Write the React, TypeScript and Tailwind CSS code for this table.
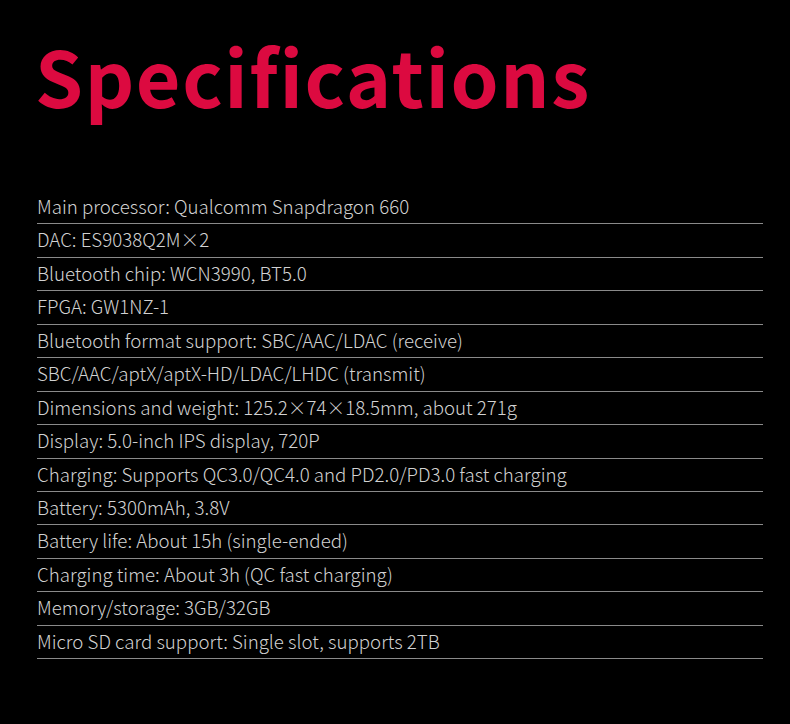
import React from "react";

const rows = [
  "Main processor: Qualcomm Snapdragon 660",
  "DAC: ES9038Q2M\u00d72",
  "Bluetooth chip: WCN3990, BT5.0",
  "FPGA: GW1NZ-1",
  "Bluetooth format support: SBC/AAC/LDAC (receive)",
  "SBC/AAC/aptX/aptX-HD/LDAC/LHDC (transmit)",
  "Dimensions and weight: 125.2\u00d774\u00d718.5mm, about 271g",
  "Display: 5.0-inch IPS display, 720P",
  "Charging: Supports QC3.0/QC4.0 and PD2.0/PD3.0 fast charging",
  "Battery: 5300mAh, 3.8V",
  "Battery life: About 15h (single-ended)",
  "Charging time: About 3h (QC fast charging)",
  "Memory/storage: 3GB/32GB",
  "Micro SD card support: Single slot, supports 2TB",
];

export default function App() {
  return (
    <div
      className="w-[790px] h-[724px] bg-black overflow-hidden"
      style={{ fontFamily: '"Noto Sans CJK SC", "Noto Sans", sans-serif' }}
    >
      <div className="pt-[37px] pl-[35px]">
        <h1 className="text-[#dc0a40] font-bold text-[77px] leading-[76px] tracking-[1.6px]">
          Specifications
        </h1>
      </div>
      <div className="mt-[78px] ml-[37px] w-[726px]">
        {rows.map((r) => (
          <div
            key={r}
            className="h-[33.45px] border-b border-[#8a8a8a] text-[18.7px] leading-[29px] text-[#d2d2d2] font-extralight whitespace-nowrap"
          >
            {r}
          </div>
        ))}
      </div>
    </div>
  );
}
